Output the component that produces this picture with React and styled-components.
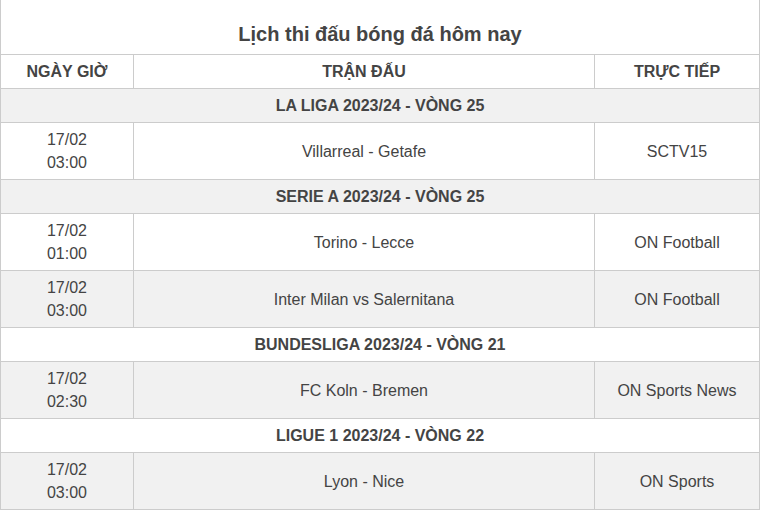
import styled, { createGlobalStyle } from "styled-components";

const Global = createGlobalStyle`
body {
  margin: 0;
  background: #fff;
  font-family: "Liberation Sans", Arial, sans-serif;
  color: #444;
}
`

const Table = styled.div`
width: 760px;
box-sizing: border-box;
border-left: 1px solid #ccc;
border-right: 1px solid #ccc;
display: grid;
grid-template-columns: 133px 461px 1fr;
`
const Title = styled.div`
grid-column: 1 / -1;
border-bottom: 1px solid #ccc;
display: flex;
align-items: flex-end;
justify-content: center;
padding-bottom: 8px;
height: 46px;
font-size: 20px;
font-weight: bold;
`
const Cell = styled.div`
display: flex;
flex-direction: column;
align-items: center;
justify-content: center;
text-align: center;
border-bottom: 1px solid #ccc;
border-right: ${(p) => (p.$last ? "none" : "1px solid #ccc")};
background: ${(p) => (p.$shade ? "#f1f1f1" : "#fff")};
font-size: 16px;
line-height: 23px;
height: ${(p) => (p.$tall ? "56px" : "33px")};
font-weight: ${(p) => (p.$bold ? "bold" : "normal")};
`
const Section = styled(Cell)`
grid-column: 1 / -1;
border-right: none;
font-weight: bold;
`

const groups = [
  {
    name: "LA LIGA 2023/24 - VÒNG 25",
    games: [{ date: "17/02", time: "03:00", match: "Villarreal - Getafe", tv: "SCTV15" }],
  },
  {
    name: "SERIE A 2023/24 - VÒNG 25",
    games: [
      { date: "17/02", time: "01:00", match: "Torino - Lecce", tv: "ON Football" },
      { date: "17/02", time: "03:00", match: "Inter Milan vs Salernitana", tv: "ON Football" },
    ],
  },
  {
    name: "BUNDESLIGA 2023/24 - VÒNG 21",
    games: [{ date: "17/02", time: "02:30", match: "FC Koln - Bremen", tv: "ON Sports News" }],
  },
  {
    name: "LIGUE 1 2023/24 - VÒNG 22",
    games: [{ date: "17/02", time: "03:00", match: "Lyon - Nice", tv: "ON Sports" }],
  },
];

const App = () => {
  let row = 1;
  const rows = [];
  groups.forEach((g) => {
    row++;
    rows.push(
      <Section key={g.name} $shade={row % 2 === 0}>
        {g.name}
      </Section>
    );
    g.games.forEach((m) => {
      row++;
      const shade = row % 2 === 0;
      rows.push(
        <Cell key={m.match + "d"} $tall $shade={shade}>
          <span>{m.date}</span>
          <span>{m.time}</span>
        </Cell>,
        <Cell key={m.match + "m"} $tall $shade={shade}>
          {m.match}
        </Cell>,
        <Cell key={m.match + "t"} $tall $shade={shade} $last>
          {m.tv}
        </Cell>
      );
    });
  });

  return (
    <>
      <Global />
      <Table>
        <Title>Lịch thi đấu bóng đá hôm nay</Title>
        <Cell $bold>NGÀY GIỜ</Cell>
        <Cell $bold>TRẬN ĐẤU</Cell>
        <Cell $bold $last>TRỰC TIẾP</Cell>
        {rows}
      </Table>
    </>
  );
};

export default App;
